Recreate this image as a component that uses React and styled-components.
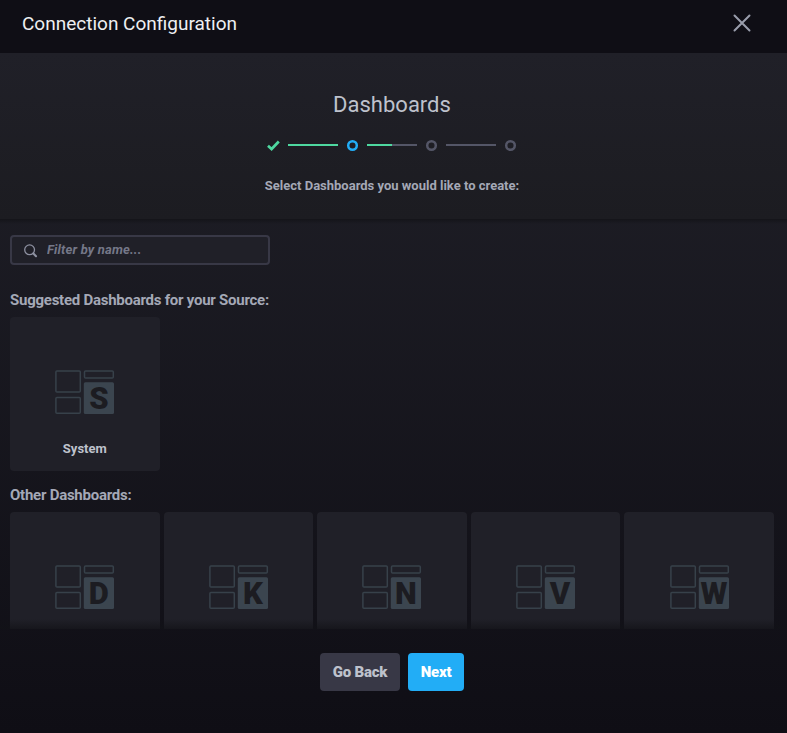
import React from "react";
import styled, { createGlobalStyle } from "styled-components";

const GlobalStyle = createGlobalStyle`
  * { box-sizing: border-box; }
  body { margin: 0; background: #0f0e15; font-family: Roboto, sans-serif; }
`;

const Overlay = styled.div`
  height: 733px;
  display: flex;
  flex-direction: column;
  overflow: hidden;
`;

const Header = styled.header`
  flex: 0 0 53px;
  display: flex;
  align-items: center;
  justify-content: space-between;
  padding: 0 36px 6px 22px;
  background: #0f0e15;
`;

const Title = styled.h1`
  margin: 0;
  font-size: 19px;
  font-weight: 400;
  line-height: 24px;
  color: #eeeff2;
`;

const CloseButton = styled.button`
  display: flex;
  padding: 0 0 1px;
  border: 0;
  background: none;
`;

const Wizard = styled.main`
  flex: 1;
  min-height: 0;
  display: flex;
  flex-direction: column;
  background: linear-gradient(to bottom, #202028 0%, #0f0e15 100%);
`;

const StepHeader = styled.section`
  flex: 0 0 166px;
  display: flex;
  flex-direction: column;
  align-items: center;
  padding: 39px 3px 0 0;
  background: linear-gradient(to bottom, #202028, #1c1c21);
`;

const StepTitle = styled.h2`
  margin: 0;
  font-size: 22px;
  font-weight: 400;
  line-height: 26px;
  color: #bec2cc;
`;

const Progress = styled.div`
  display: flex;
  align-items: center;
  gap: 8px;
  height: 14px;
  margin-top: 20px;
`;

const StepMark = styled.svg`
  display: block;
  width: 13px;
  height: 13px;
  margin-top: 1px;
`;

const Connector = styled.span`
  width: 50px;
  height: 2px;
  margin-bottom: 1px;
  background: linear-gradient(to right, #4ed8a0 ${(p) => p.$done}%, #545667 ${(p) => p.$done}%);
`;

const StepText = styled.p`
  margin: 25px 0 0;
  font-size: 13px;
  font-weight: 700;
  line-height: 18px;
  color: #a4a8b6;
`;

const ScrollArea = styled.section`
  position: relative;
  flex: 0 0 410px;
  overflow: hidden;
  padding: 16px 13px 0 10px;
  &::before, &::after {
    content: "";
    position: absolute;
    left: 0;
    right: 0;
    pointer-events: none;
  }
  &::before {
    top: 0;
    height: 5px;
    background: linear-gradient(to bottom, #141419, transparent);
  }
  &::after {
    bottom: 0;
    height: 10px;
    background: linear-gradient(to top, rgba(18, 18, 23, 0.7), transparent);
  }
`;

const Search = styled.label`
  display: flex;
  align-items: center;
  gap: 9px;
  width: 260px;
  height: 30px;
  padding: 0 11px 0 12px;
  border: 2px solid #383846;
  border-radius: 4px;
  background: #202028;
`;

const SearchIcon = styled.svg`
  width: 14px;
  height: 14px;
  margin-top: 2px;
`;

const SearchInput = styled.input`
  width: 190px;
  padding: 0 0 2px;
  border: 0;
  outline: 0;
  background: none;
  font: 700 13px Roboto, sans-serif;
  letter-spacing: 0.17px;
  color: #a4a8b6;
  &::placeholder { color: #757888; font-style: italic; opacity: 1; }
`;

const GroupTitle = styled.h3`
  margin: ${(p) => p.$top}px 0 0;
  font-size: 15px;
  font-weight: 700;
  line-height: 20px;
  letter-spacing: -0.25px;
  color: #a4a8b6;
`;

const CardGrid = styled.div`
  display: grid;
  grid-template-columns: repeat(5, 1fr);
  column-gap: 4px;
  margin-top: 7px;
`;

const Card = styled.div`
  height: 154px;
  display: flex;
  flex-direction: column;
  align-items: center;
  padding: 53px 0 0 1px;
  border-radius: 4px;
  background: #202028;
`;

const CardIcon = styled.svg`
  display: block;
  width: 60px;
  height: 44px;
  flex: none;
  overflow: visible;
`;

const Letter = styled.text`
  font-family: Roboto, sans-serif;
  font-size: 31px;
  font-weight: 900;
  line-height: 1;
  fill: #1c1c21;
  text-anchor: middle;
`;

const CardName = styled.span`
  margin: 26px 1px 0 0;
  font-size: 13px;
  font-weight: 700;
  line-height: 18px;
  color: #bec2cc;
`;

const Footer = styled.footer`
  display: flex;
  justify-content: center;
  gap: 8px;
  padding: 24px 3px 0 0;
`;

const Button = styled.button`
  width: ${(p) => (p.$primary ? 56 : 80)}px;
  height: 38px;
  padding: 0;
  border: 0;
  border-radius: 4px;
  background: ${(p) => (p.$primary ? "#22adf6" : "#383846")};
  color: ${(p) => (p.$primary ? "#ffffff" : "#bec2cc")};
  font: 900 15px Roboto, sans-serif;
  letter-spacing: -0.22px;
`;

function Step({ status }) {
  if (status === "done") {
    return (
      <StepMark viewBox="0 0 13 13">
        <path d="M1 6.7L4.6 10L11.8 2.5" fill="none" stroke="#4ed8a0" strokeWidth="2.7" />
      </StepMark>
    );
  }
  return (
    <StepMark viewBox="0 0 13 13">
      <circle cx="6.5" cy="6.5" r="4.3" fill="none" strokeWidth="2.5"
        stroke={status === "current" ? "#22adf6" : "#545667"} />
    </StepMark>
  );
}

function DashboardCard({ initial, name }) {
  return (
    <Card>
      <CardIcon viewBox="0 0 60 44">
        <g fill="none" stroke="#37414a" strokeWidth="1.5">
          <rect x="0.9" y="0.9" width="24.4" height="21.2" rx="1" />
          <rect x="0.9" y="27.4" width="24.4" height="15.8" rx="1" />
          <rect x="29.5" y="0.9" width="28.8" height="7.2" rx="1" />
        </g>
        <rect x="28.8" y="12.2" width="30.2" height="31.8" rx="1.5" fill="#3b454f" />
        <Letter x="43.9" y="39.2">{initial}</Letter>
      </CardIcon>
      {name && <CardName>{name}</CardName>}
    </Card>
  );
}

const otherInitials = ["D", "K", "N", "V", "W"];

export default function App() {
  return (
    <Overlay>
      <GlobalStyle />
      <Header>
        <Title>Connection Configuration</Title>
        <CloseButton aria-label="Close">
          <svg width="18" height="18" viewBox="0 0 18 18">
            <path d="M1.5 1.5L16.5 16.5M16.5 1.5L1.5 16.5" stroke="#999dab" strokeWidth="2" strokeLinecap="round" />
          </svg>
        </CloseButton>
      </Header>
      <Wizard>
        <StepHeader>
          <StepTitle>Dashboards</StepTitle>
          <Progress>
            <Step status="done" />
            <Connector $done={100} />
            <Step status="current" />
            <Connector $done={50} />
            <Step />
            <Connector $done={0} />
            <Step />
          </Progress>
          <StepText>Select Dashboards you would like to create:</StepText>
        </StepHeader>
        <ScrollArea>
          <Search>
            <SearchIcon viewBox="0 0 14 14" fill="none" stroke="#8e91a1">
              <circle cx="5.6" cy="5.8" r="4.9" strokeWidth="1.3" />
              <path d="M9.4 9.6L12 12.2" strokeWidth="2.1" strokeLinecap="round" />
            </SearchIcon>
            <SearchInput placeholder="Filter by name..." />
          </Search>
          <GroupTitle $top={25}>Suggested Dashboards for your Source:</GroupTitle>
          <CardGrid>
            <DashboardCard initial="S" name="System" />
          </CardGrid>
          <GroupTitle $top={14}>Other Dashboards:</GroupTitle>
          <CardGrid>
            {otherInitials.map((initial) => <DashboardCard key={initial} initial={initial} />)}
          </CardGrid>
        </ScrollArea>
        <Footer>
          <Button>Go Back</Button>
          <Button $primary>Next</Button>
        </Footer>
      </Wizard>
    </Overlay>
  );
}
